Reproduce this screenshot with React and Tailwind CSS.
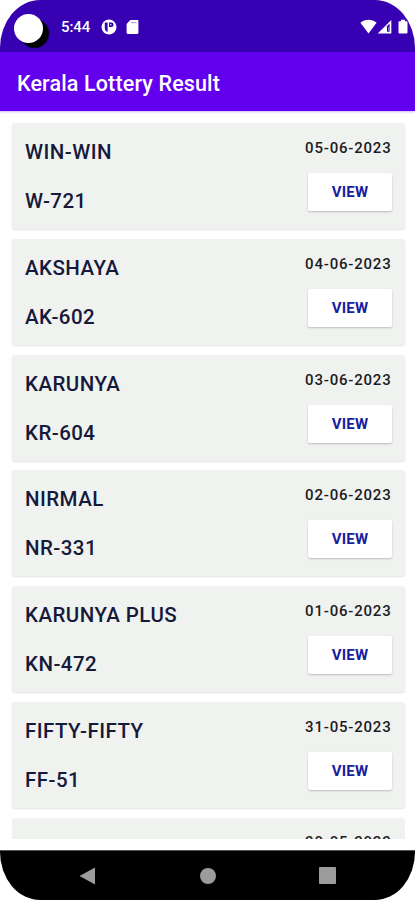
import React from 'react';

const results = [
  { name: 'WIN-WIN', code: 'W-721', date: '05-06-2023' },
  { name: 'AKSHAYA', code: 'AK-602', date: '04-06-2023' },
  { name: 'KARUNYA', code: 'KR-604', date: '03-06-2023' },
  { name: 'NIRMAL', code: 'NR-331', date: '02-06-2023' },
  { name: 'KARUNYA PLUS', code: 'KN-472', date: '01-06-2023' },
  { name: 'FIFTY-FIFTY', code: 'FF-51', date: '31-05-2023' },
];

function StatusBar() {
  return (
    <div className="flex h-[52px] shrink-0 items-start bg-[#3700b3] pl-[14px] text-white">
      {/* camera cutout */}
      <div className="mt-[14px] h-[29px] w-[29px] rounded-full bg-white shadow-[6px_5px_1px_#000]" />
      <span className="ml-[18px] mt-[18px] w-[30px] whitespace-nowrap text-[15px] font-medium leading-[18px] tracking-[-0.1px]">5:44</span>
      <svg className="ml-[10px] mt-[19px]" width="16" height="16" viewBox="0 0 16 16">
        <circle cx="8" cy="8" r="7.5" fill="#fff" />
        <path d="M4.800 3.600H6.600v9.200H5.800C4.400 12 3.800 10.600 3.800 8.600V4.600c0-.6.400-1 1-1z" fill="#3700b3" />
        <path d="M8 3.600h2.400a2.200 2.200 0 0 1 0 4.400H8z" fill="#3700b3" />
        <circle cx="9.800" cy="5.800" r="0.700" fill="#fff" />
      </svg>
      <svg className="ml-[9px] mt-[20px]" width="13" height="14" viewBox="0 0 13 14">
        <path d="M4.3 0h6.9c.7 0 1.2.5 1.2 1.2v11.6c0 .7-.5 1.2-1.2 1.2H1.8C1.1 14 .6 13.5.6 12.8V4z" fill="#fff" />
        <path d="M5 2.600h5.500" stroke="#3700b3" strokeWidth="1.200" opacity="0.350" />
      </svg>
      <svg className="ml-auto mt-[19px]" width="17" height="15" viewBox="0 0 17 15">
        <path d="M.4 3.8C2.6 1.800 5.400.7 8.500.7s5.900 1.100 8.100 3.100L8.500 14.400z" fill="#fff" />
      </svg>
      <svg className="mt-[19px]" width="15" height="15" viewBox="0 0 15 15">
        <path d="M.7 14.500 14.300.9v13.600z" fill="#fff" />
        <path d="M10 7.200 12.600 4.600v8.200H10z" fill="#3700b3" />
        <path d="M11 8h.9v4H11z" fill="#fff" opacity="0.400" />
      </svg>
      <svg className="ml-[6px] mr-[7px] mt-[19px]" width="10" height="15" viewBox="0 0 10 15">
        <path d="M3 .8h4v1.400h1.600c.5 0 .9.400.9.900v10.500c0 .5-.4.900-.9.900H1.400c-.5 0-.9-.4-.9-.9V3.100c0-.5.400-.9.900-.9H3z" fill="#fff" />
      </svg>
    </div>
  );
}

function ResultCard({ name, code, date }) {
  return (
    <div className="flex h-[106px] shrink-0 justify-between rounded-[3px] bg-[#f0f2f0] pl-[13.5px] pr-[12.5px] shadow-[0_1px_2px_rgba(0,0,0,0.12)]">
      <div className="flex flex-col gap-[25px] pt-[17px] text-[20.5px] font-medium leading-[24px] tracking-[0.45px] text-[#15193a]">
        <span>{name}</span>
        <span>{code}</span>
      </div>
      <div className="flex flex-col items-end pt-[16px]">
        <span className="mr-[0.5px] text-[15px] font-medium leading-[18px] tracking-[0.8px] text-[#1c1c1e]">{date}</span>
        <button className="mt-[16px] h-[38px] w-[84px] rounded-[2px] bg-white text-[15px] font-bold leading-[18px] tracking-[0.2px] text-[#1720a0] shadow-[0_1px_2px_rgba(0,0,0,0.22)]">
          VIEW
        </button>
      </div>
    </div>
  );
}

function NavBar() {
  return (
    <div className="flex h-[50px] shrink-0 items-center justify-between border-t border-[#555] bg-black pl-[79px] pr-[79px]">
      <svg width="17" height="18" viewBox="0 0 17 18">
        <path d="M16 .5v17L.5 9z" fill="#9c9c9c" />
      </svg>
      <div className="h-[16px] w-[16px] rounded-full bg-[#9c9c9c]" />
      <div className="h-[17px] w-[17px] rounded-[1px] bg-[#9c9c9c]" />
    </div>
  );
}

export default function App() {
  return (
    <div className="h-[900px] w-[415px] bg-white">
      <div className="flex h-full w-full flex-col overflow-hidden rounded-[40px/48px] bg-white font-['Roboto',sans-serif]">
        <StatusBar />
        <header className="flex h-[59px] shrink-0 items-center bg-[#6200ee] pl-[17px] pt-[4px] shadow-[0_1px_2px_rgba(98,0,238,0.3)]">
          <h1 className="whitespace-nowrap text-[21.5px] font-medium leading-[26px] tracking-[0.14px] text-white">Kerala Lottery Result</h1>
        </header>
        <main className="flex h-[728px] shrink-0 flex-col gap-[9.8px] overflow-hidden pl-[11.5px] pr-[10.5px] pt-[12px]">
          {results.map((r) => (
            <ResultCard key={r.date} {...r} />
          ))}
          {/* next card, peeking in above the fold */}
          <div className="flex h-[106px] shrink-0 justify-end rounded-[3px] bg-[#f0f2f0] pr-[13px] pt-[15.5px]">
            <span className="text-[15px] font-medium leading-[18px] tracking-[0.8px] text-[#1c1c1e]">30-05-2023</span>
          </div>
        </main>
        <div className="h-[11px] shrink-0 bg-white" />
        <NavBar />
      </div>
    </div>
  );
}
